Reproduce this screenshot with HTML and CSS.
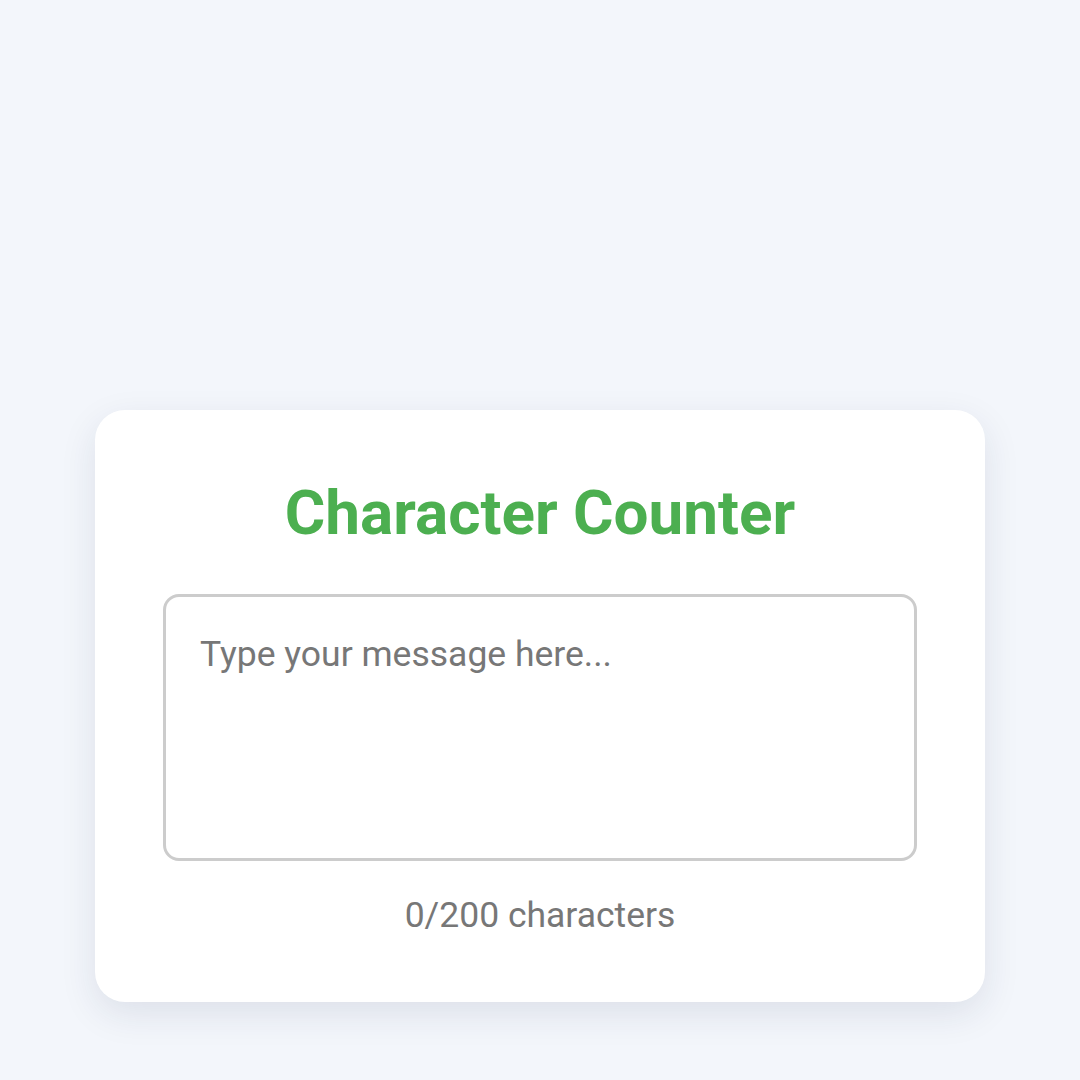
FILE: index.html
```html
<!DOCTYPE html>
<html>
<head>
<meta charset="utf-8">
<link rel="stylesheet" href="styles.css">
</head>
<body>
<main class="page">
  <section class="card">
    <h1 class="title">Character Counter</h1>
    <textarea class="message" placeholder="Type your message here..." maxlength="200"></textarea>
    <p class="count">0/200 characters</p>
  </section>
</main>
</body>
</html>
```
FILE: styles.css
```css
html, body {
  margin: 0;
  padding: 0;
  background: #f3f6fb;
  font-family: Roboto, "Noto Sans", sans-serif;
}
.page {
  height: 1080px;
  box-sizing: border-box;
  padding-top: 410px;
  display: flex;
  justify-content: center;
  align-items: flex-start;
}
.card {
  width: 890px;
  box-sizing: border-box;
  background: #fff;
  border-radius: 30px;
  padding: 66px 68px 65px;
  box-shadow: 0 12px 36px rgba(30, 40, 80, 0.10);
  display: flex;
  flex-direction: column;
  align-items: center;
}
.title {
  margin: 0 0 44px;
  font-size: 62px;
  font-weight: 700;
  color: #4caf50;
  line-height: 1.2;
}
.message {
  width: 100%;
  height: 267px;
  box-sizing: border-box;
  border: 3px solid #cccccc;
  border-radius: 16px;
  padding: 36px 34px 30px;
  font-family: Roboto, "Noto Sans", sans-serif;
  font-size: 35.5px;
  color: #333;
  resize: none;
  outline: none;
}
.message::placeholder {
  color: #777777;
}
.count {
  margin: 33px 0 0;
  font-size: 35.5px;
  color: #777777;
  line-height: 1.2;
}
```
